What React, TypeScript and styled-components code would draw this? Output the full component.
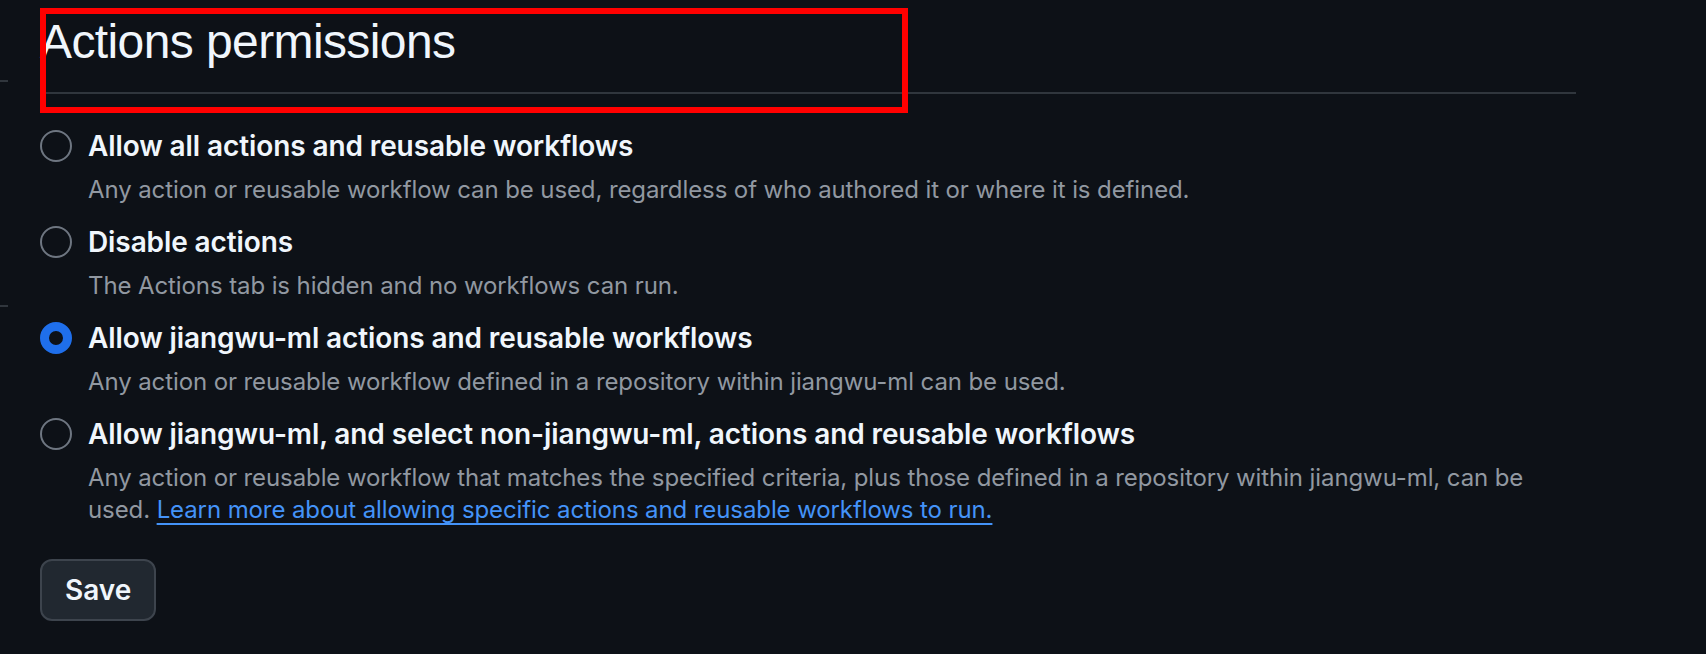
import React, { useState } from "react";
import styled, { createGlobalStyle } from "styled-components";

const GlobalStyle = createGlobalStyle`
  html, body {
    margin: 0;
    padding: 0;
    background: #0d1117;
  }
  body {
    font-family: Inter, "Noto Sans", "Liberation Sans", sans-serif;
    color: #f0f6fc;
  }
`;

const Page = styled.div`
  display: flex;
  min-height: 654px;
  background: #0d1117;
`;

const Sidebar = styled.aside`
  width: 8px;
  display: flex;
  flex-direction: column;
`;

const SideItem = styled.div<{ $h: number }>`
  height: ${(p) => p.$h}px;
  border-bottom: 2px solid #30363d;
`;

const Main = styled.main`
  margin-left: 32px;
  width: 1536px;
  padding-top: 4px;
  display: flex;
  flex-direction: column;
`;

const Subhead = styled.div`
  position: relative;
  padding-top: 2px;
  padding-bottom: 14px;
  border-bottom: 2px solid #30363d;
`;

const Heading = styled.h2`
  margin: 0;
  font-family: "Liberation Sans", Arial, sans-serif;
  font-size: 48px;
  line-height: 72px;
  font-weight: 400;
  letter-spacing: -0.6px;
  color: #f0f6fc;
`;

const Highlight = styled.div`
  position: absolute;
  left: 0;
  top: 4px;
  width: 868px;
  height: 105px;
  box-sizing: border-box;
  border: 6px solid #ff0000;
  pointer-events: none;
`;

const Options = styled.div`
  margin-top: 32px;
  display: flex;
  flex-direction: column;
  gap: 16px;
`;

const Option = styled.label`
  display: grid;
  grid-template-columns: 32px 1fr;
  column-gap: 16px;
  cursor: pointer;
`;

const RadioCell = styled.div`
  height: 40px;
  display: flex;
  align-items: center;
`;

const Radio = styled.input`
  appearance: none;
  margin: 0;
  width: 32px;
  height: 32px;
  box-sizing: border-box;
  border-radius: 50%;
  border: 2px solid #6e7681;
  background: transparent;
  cursor: pointer;
  &:checked {
    border: 9px solid #1f6feb;
  }
`;

const Title = styled.div`
  font-size: 28px;
  line-height: 40px;
  font-weight: 600;
  letter-spacing: -0.1px;
  color: #f0f6fc;
`;

const Desc = styled.div`
  grid-column: 2;
  margin-top: 8px;
  font-size: 24px;
  line-height: 32px;
  font-weight: 400;
  letter-spacing: -0.1px;
  color: #9198a1;
`;

const Link = styled.a`
  color: #4493f8;
  text-decoration: underline;
  text-decoration-thickness: 2px;
  text-underline-offset: 5px;
`;

const SaveButton = styled.button`
  margin-top: 33px;
  align-self: flex-start;
  height: 62px;
  padding: 0 23px;
  box-sizing: border-box;
  border-radius: 12px;
  border: 2px solid #3d444d;
  background: #212830;
  color: #f0f6fc;
  font-family: inherit;
  font-size: 28px;
  font-weight: 600;
  cursor: pointer;
`;

type Opt = { id: string; title: string; desc: React.ReactNode };

const options: Opt[] = [
  {
    id: "all",
    title: "Allow all actions and reusable workflows",
    desc: "Any action or reusable workflow can be used, regardless of who authored it or where it is defined.",
  },
  {
    id: "disable",
    title: "Disable actions",
    desc: "The Actions tab is hidden and no workflows can run.",
  },
  {
    id: "local",
    title: "Allow jiangwu-ml actions and reusable workflows",
    desc: "Any action or reusable workflow defined in a repository within jiangwu-ml can be used.",
  },
  {
    id: "select",
    title: "Allow jiangwu-ml, and select non-jiangwu-ml, actions and reusable workflows",
    desc: (
      <>
        Any action or reusable workflow that matches the specified criteria, plus those defined in a
        repository within jiangwu-ml, can be used.{" "}
        <Link href="#">Learn more about allowing specific actions and reusable workflows to run.</Link>
      </>
    ),
  },
];

export default function App() {
  const [value, setValue] = useState("local");
  return (
    <>
      <GlobalStyle />
      <Page>
        <Sidebar>
          <SideItem $h={80} />
          <SideItem $h={223} />
        </Sidebar>
        <Main>
          <Subhead>
            <Heading>Actions permissions</Heading>
            <Highlight />
          </Subhead>
          <Options>
            {options.map((o) => (
              <Option key={o.id}>
                <RadioCell>
                  <Radio
                    type="radio"
                    name="perm"
                    checked={value === o.id}
                    onChange={() => setValue(o.id)}
                  />
                </RadioCell>
                <Title>{o.title}</Title>
                <Desc>{o.desc}</Desc>
              </Option>
            ))}
          </Options>
          <SaveButton type="button">Save</SaveButton>
        </Main>
      </Page>
    </>
  );
}
